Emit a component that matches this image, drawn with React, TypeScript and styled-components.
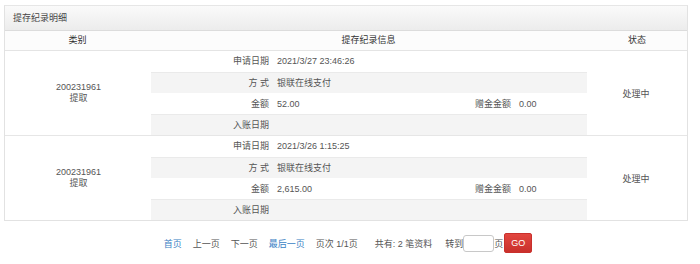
import * as React from "react";
import styled, { createGlobalStyle } from "styled-components";

type Record = {
  id: string;
  kind: string;
  applyDate: string;
  method: string;
  amount: string;
  bonus: string;
  creditDate: string;
  status: string;
};

const records: Record[] = [
  {
    id: "200231961",
    kind: "提取",
    applyDate: "2021/3/27 23:46:26",
    method: "银联在线支付",
    amount: "52.00",
    bonus: "0.00",
    creditDate: "",
    status: "处理中",
  },
  {
    id: "200231961",
    kind: "提取",
    applyDate: "2021/3/26 1:15:25",
    method: "银联在线支付",
    amount: "2,615.00",
    bonus: "0.00",
    creditDate: "",
    status: "处理中",
  },
];

export default function App() {
  return (
    <Page>
      <GlobalStyle />
      <Panel>
        <PanelTitle>提存纪录明细</PanelTitle>
        <HeadRow>
          <HeadCell>类别</HeadCell>
          <HeadCell>提存纪录信息</HeadCell>
          <HeadCell>状态</HeadCell>
        </HeadRow>
        {records.map((r, i) => (
          <RecordRow key={i}>
            <KindCell>
              <div>{r.id}</div>
              <div>{r.kind}</div>
            </KindCell>
            <Info>
              <SubRow>
                <Label>申请日期</Label>
                <Value>{r.applyDate}</Value>
              </SubRow>
              <SubRow $striped>
                <Label>方 式</Label>
                <Value>{r.method}</Value>
              </SubRow>
              <SubRow>
                <Label>金额</Label>
                <Value>{r.amount}</Value>
                <Label>赠金金额</Label>
                <Value>{r.bonus}</Value>
              </SubRow>
              <SubRow $striped>
                <Label>入账日期</Label>
                <Value>{r.creditDate}</Value>
              </SubRow>
            </Info>
            <StatusCell>{r.status}</StatusCell>
          </RecordRow>
        ))}
      </Panel>
      <Pager>
        <PageLink $active>首页</PageLink>
        <PageLink>上一页</PageLink>
        <PageLink>下一页</PageLink>
        <PageLink $active>最后一页</PageLink>
        <PageText>页次 1/1页</PageText>
        <PageText $wide>共有: 2 笔资料</PageText>
        <Jump>
          转到
          <JumpInput type="text" />
          页
          <GoButton>GO</GoButton>
        </Jump>
      </Pager>
    </Page>
  );
}

const GlobalStyle = createGlobalStyle`
  body {
    margin: 0;
    background: #fff;
    font-family: "Liberation Sans", "Noto Sans CJK SC", sans-serif;
    font-size: 9px;
    color: #555;
  }
`;

const Page = styled.div`
  width: 684px;
  padding: 5px 12px 0 4px;
`;

const Panel = styled.div`
  border: 1px solid #e2e2e2;
  border-top-color: #e6e6e6;
  background: #fff;
`;

const PanelTitle = styled.div`
  height: 24px;
  line-height: 24px;
  padding-left: 8px;
  color: #444;
  background: linear-gradient(#fafafa, #ececec);
  border-bottom: 1px solid #dcdcdc;
`;

const HeadRow = styled.div`
  display: grid;
  grid-template-columns: 145px 437px 1fr;
  height: 19px;
  line-height: 19px;
  border-bottom: 1px solid #e4e4e4;
  background: #fcfcfc;
`;

const HeadCell = styled.div`
  text-align: center;
  color: #333;
`;

const RecordRow = styled.div`
  display: grid;
  grid-template-columns: 145px 437px 1fr;
  border-bottom: 1px solid #e6e6e6;

  &:last-child {
    border-bottom: none;
  }
`;

const KindCell = styled.div`
  display: flex;
  flex-direction: column;
  justify-content: center;
  align-items: center;
  padding-left: 2px;
  line-height: 11px;
  color: #555;
`;

const Info = styled.div`
  display: flex;
  flex-direction: column;
  padding-left: 1px;
`;

const SubRow = styled.div<{ $striped?: boolean }>`
  display: grid;
  grid-template-columns: 126px 164px 78px 1fr;
  height: 21px;
  line-height: 21px;
  background: ${(p) => (p.$striped ? "#f4f4f4" : "#fff")};
  border-top: 1px solid ${(p) => (p.$striped ? "#eaeaea" : "#fff")};
  box-sizing: border-box;

  &:first-child {
    border-top: none;
  }
`;

const Label = styled.div`
  text-align: right;
  padding-right: 8px;
  color: #555;
  white-space: nowrap;
`;

const Value = styled.div`
  color: #555;
  white-space: nowrap;
`;

const StatusCell = styled.div`
  display: flex;
  align-items: center;
  justify-content: center;
  padding-right: 2px;
  color: #555;
`;

const Pager = styled.div`
  display: flex;
  align-items: center;
  justify-content: center;
  gap: 11px;
  margin-top: 12px;
  height: 20px;
  padding-left: 4px;
`;

const PageLink = styled.span<{ $active?: boolean }>`
  color: ${(p) => (p.$active ? "#3b7fc4" : "#555")};
  cursor: pointer;
`;

const PageText = styled.span<{ $wide?: boolean }>`
  color: #555;
  white-space: nowrap;
  margin-left: ${(p) => (p.$wide ? "6px" : "0")};
`;

const Jump = styled.span`
  display: flex;
  align-items: center;
  color: #555;
  margin-left: 2px;
`;

const JumpInput = styled.input`
  width: 31px;
  height: 17px;
  box-sizing: border-box;
  margin: 0;
  padding: 0 3px;
  border: 1px solid #c8c8c8;
  border-radius: 3px;
  font-size: 9px;
  outline: none;
`;

const GoButton = styled.button`
  margin-left: 1px;
  width: 28px;
  height: 20px;
  padding: 0;
  border: 1px solid #c9302c;
  border-radius: 2px;
  background: linear-gradient(#e2463f, #c9302c);
  color: #fff;
  font-family: "Liberation Sans", sans-serif;
  font-size: 9px;
  cursor: pointer;
`;
